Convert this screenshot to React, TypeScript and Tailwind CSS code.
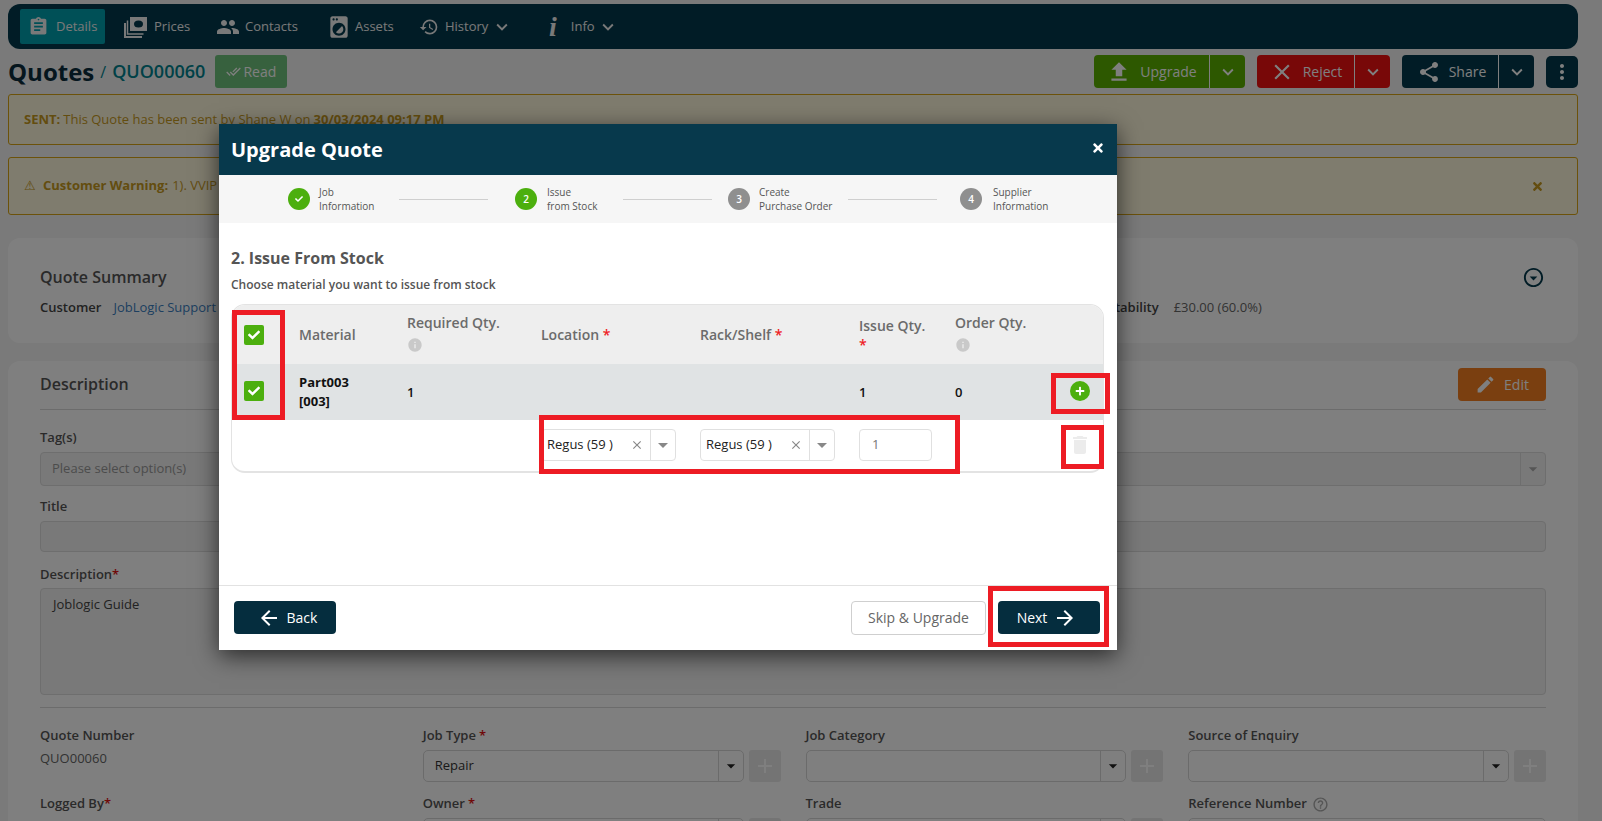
import {
  MdAssignment,
  MdPeople,
  MdLocalLaundryService,
  MdHistory,
  MdKeyboardArrowDown,
  MdFileUpload,
  MdClose,
  MdShare,
  MdMoreVert,
  MdEdit,
  MdDoneAll,
  MdAdd,
  MdArrowBack,
  MdArrowForward,
  MdArrowDropDown,
  MdDelete,
  MdInfo,
  MdOutlineArrowDropDownCircle,
  MdHelpOutline,
} from "react-icons/md";
import { FaCheck, FaPlus, FaTimes } from "react-icons/fa";

const Prices = () => (
  <svg width="23" height="22" viewBox="0 0 23 22" fill="none" stroke="currentColor" strokeWidth="2">
    <path d="M1 7v14h17" />
    <path d="M3.5 4.5v13.5h16" strokeWidth="1.5" />
    <rect x="6" y="1" width="17" height="14" fill="currentColor" stroke="none" />
    <ellipse cx="14.5" cy="8" rx="4.5" ry="3.5" fill="#03394c" stroke="none" />
  </svg>
);

const NavItem = ({ icon, label, chevron, className }: { icon: React.ReactNode; label: string; chevron?: string; className: string }) => (
  <div className={`flex items-center text-[13px] ${className}`}>
    {icon}
    <span className="flex items-center">
      {label}
      {chevron ? <MdKeyboardArrowDown size={22} className={chevron} /> : null}
    </span>
  </div>
);

const SplitButton = ({ icon, label, bg, main, w }: { icon: React.ReactNode; label: string; bg: string; main: string; w: string }) => (
  <div className={`flex h-[33px] items-center rounded-[4px] text-white text-[14px] ${bg} ${w}`}>
    <div className={`flex items-center justify-center gap-[8px] h-full border-r border-white ${main}`}>
      {icon}
      <span>{label}</span>
    </div>
    <div className="flex-1 flex justify-center">
      <MdKeyboardArrowDown size={22} />
    </div>
  </div>
);

const FormSelect = ({ value, plus, arrow = true }: { value?: string; plus?: boolean; arrow?: boolean }) => (
  <div className="flex gap-[5px]">
    <div className="flex-1 h-[32px] flex items-center border border-[#d6d6d6] rounded-[5px] text-[13px] text-[#333] pl-[11px]">
      <span className="flex-1">{value}</span>
      {arrow ? (
        <div className="w-[25px] h-full border-l border-[#d6d6d6] flex items-center justify-center text-[#222]">
          <MdArrowDropDown size={20} />
        </div>
      ) : null}
    </div>
    {plus ? (
      <div className="w-[32px] h-[32px] bg-[#e8e8e8] rounded-[3px] flex items-center justify-center text-white">
        <MdAdd size={24} />
      </div>
    ) : null}
  </div>
);

const Label = ({ text, required, tight, children }: { text: string; required?: boolean; tight?: boolean; children?: React.ReactNode }) => (
  <div className="h-[16px] flex items-center text-[13px] font-semibold text-[#555]">
    {text}
    {required ? <span className={`text-[#e01010] ${tight ? "" : "ml-[3px]"}`}>*</span> : null}
    {children}
  </div>
);

const steps = [
  { n: "check", a: "Job", b: "Information", text: "w-[80px]", gap: "mr-[27px]", on: true },
  { n: "2", a: "Issue", b: "from Stock", text: "w-[76px] ml-[10px]", gap: "mr-[16px]", on: true },
  { n: "3", a: "Create", b: "Purchase Order", text: "w-[89px]", gap: "mr-[23px]", on: false },
  { n: "4", a: "Supplier", b: "Information", text: "ml-[11px]", gap: "", on: false },
];

const Stepper = () => (
  <div className="h-[48px] bg-[#f6f6f6] flex items-center pl-[69px]">
    {steps.map((s, i) => (
      <div key={s.n} className="flex items-center">
        <div className={`w-[22px] h-[22px] rounded-full flex items-center justify-center text-white text-[10px] font-semibold ${s.on ? "bg-[#4caf0e]" : "bg-[#8f8f8f]"}`}>
          {s.n === "check" ? <FaCheck size={8} /> : s.n}
        </div>
        <div className={`ml-[9px] text-[10px] leading-[14px] text-[#555] ${s.text}`}>
          <div>{s.a}</div>
          <div>{s.b}</div>
        </div>
        {i < 3 ? <div className={`w-[89px] h-px bg-[#cfcfcf] ${s.gap}`} /> : null}
      </div>
    ))}
  </div>
);

const Check = () => (
  <div className="w-[20px] h-[20px] rounded-[2px] bg-[#4caf0e] flex items-center justify-center text-white">
    <FaCheck size={12} />
  </div>
);

const RowSelect = () => (
  <div className="w-[135px] h-[32px] flex items-center border border-[#e0e0e0] rounded-[4px] text-[13px] text-[#222] pl-[5px]">
    <span className="flex-1">Regus (59 )</span>
    <MdClose size={14} className="text-[#888] mr-[6px]" />
    <div className="w-[25px] h-full border-l border-[#e0e0e0] flex items-center justify-center text-[#888]">
      <MdArrowDropDown size={24} />
    </div>
  </div>
);

const grid = "grid grid-cols-[67px_108px_134px_159px_159px_96px_81px_1fr] items-center";

const HeadInfo = () => <MdInfo size={16} className="text-[#c9c9c9] mt-[5px]" />;

const Modal = () => (
  <div className="absolute left-[219px] top-[124px] w-[898px] h-[526px] bg-white flex flex-col shadow-[0_6px_22px_rgba(0,0,0,0.65)]">
    <div className="h-[51px] bg-[#07394c] flex items-center justify-between pl-[12px] pr-[12px] text-white">
      <span className="text-[20px] font-bold">Upgrade Quote</span>
      <FaTimes size={14} className="-mt-[3px]" />
    </div>
    <Stepper />
    <div className="flex-1 px-[12px]">
      <div className="mt-[23px] text-[16px] leading-[24px] font-bold text-[#555]">2. Issue From Stock</div>
      <div className="mt-[7px] text-[12px] leading-[16px] font-semibold text-[#555]">Choose material you want to issue from stock</div>
      <div className="mt-[11px] w-[873px] h-[169px] rounded-[14px] border border-[#e3e3e3] border-b-2 overflow-hidden text-[14px]">
        <div className={`${grid} h-[59px] bg-[#eeeeee] font-semibold text-[#6b6b6b]`}>
          <div className="pl-[12px]">
            <Check />
          </div>
          <div>Material</div>
          <div className="-mt-[3px]">
            <div className="leading-[18px]">Required Qty.</div>
            <HeadInfo />
          </div>
          <div>
            Location <span className="text-[#ee1c25]">*</span>
          </div>
          <div>
            Rack/Shelf <span className="text-[#ee1c25]">*</span>
          </div>
          <div>
            <div className="leading-[18px]">Issue Qty.</div>
            <div className="text-[#ee1c25] leading-[16px] mt-[2px]">*</div>
          </div>
          <div className="-mt-[3px]">
            <div className="leading-[18px]">Order Qty.</div>
            <HeadInfo />
          </div>
        </div>
        <div className={`${grid} h-[56px] bg-[#e0e3e4] text-[13px] font-semibold text-[#111]`}>
          <div className="pl-[12px] -mt-[2px]">
            <Check />
          </div>
          <div className="font-bold leading-[19px] -mt-[1px]">
            Part003
            <br />
            [003]
          </div>
          <div className="mt-[1px]">1</div>
          <div />
          <div />
          <div className="mt-[1px]">1</div>
          <div className="mt-[1px]">0</div>
          <div className="flex justify-end pr-[13px] -mt-[2px]">
            <div className="w-[20px] h-[20px] rounded-full bg-[#4caf0e] flex items-center justify-center text-white">
              <FaPlus size={10} />
            </div>
          </div>
        </div>
        <div className={`${grid} h-[51px] pb-[1px]`}>
          <div />
          <div />
          <div />
          <RowSelect />
          <RowSelect />
          <div className="w-[73px] h-[32px] border border-[#e0e0e0] rounded-[4px] flex items-center pl-[12px] text-[13px] text-[#777]">1</div>
          <div />
          <div className="flex justify-end pr-[11px] text-[#ececec]">
            <MdDelete size={24} />
          </div>
        </div>
      </div>
    </div>
    <div className="h-[65px] border-t border-[#e2e2e2] flex items-start justify-between pt-[15px] pl-[15px] pr-[17px]">
      <button className="w-[102px] h-[33px] rounded-[4px] bg-[#052d3e] text-white text-[14px] flex items-center justify-center gap-[6px] pl-[4px]">
        <MdArrowBack size={24} />
        Back
      </button>
      <div className="flex gap-[12px]">
        <button className="w-[135px] h-[34px] rounded-[4px] bg-white border border-[#cfcfcf] text-[#666] text-[14px] pb-[2px]">Skip &amp; Upgrade</button>
        <button className="w-[102px] h-[33px] rounded-[4px] bg-[#052d3e] text-white text-[14px] flex items-center justify-center gap-[6px] pr-[4px]">
          Next
          <MdArrowForward size={24} />
        </button>
      </div>
    </div>
    {/* red annotation boxes on top of the dialog */}
    <div className="absolute left-[13px] top-[186px] w-[53px] h-[110px] border-[5px] border-[#ed1c24]" />
    <div className="absolute left-[320px] top-[291px] w-[421px] h-[59px] border-[5px] border-[#ed1c24]" />
    <div className="absolute left-[832px] top-[249px] w-[59px] h-[41px] border-[5px] border-[#ed1c24]" />
    <div className="absolute left-[842px] top-[301px] w-[43px] h-[44px] border-[5px] border-[#ed1c24]" />
    <div className="absolute left-[769px] top-[462px] w-[121px] h-[61px] border-[5px] border-[#ed1c24]" />
  </div>
);

const App = () => {
  return (
    <div className="relative h-[821px] overflow-hidden bg-[#f5f5f5] pl-[8px] pr-[24px] pt-[4px] font-['Open_Sans',sans-serif]">
      <div className="h-[45px] rounded-[12px] bg-[#03394c] text-[#f2f2f2] flex items-center pl-[12px]">
        <NavItem className="w-[85px] h-[35px] bg-[#00a0ae] rounded-[2px] pl-[8px] gap-[7px]" icon={<MdAssignment size={21} />} label="Details" />
        <NavItem className="ml-[19px] w-[92px] gap-[7px]" icon={<Prices />} label="Prices" />
        <NavItem className="w-[111px] gap-[5px]" icon={<MdPeople size={24} />} label="Contacts" />
        <NavItem className="w-[92px] gap-[3px]" icon={<MdLocalLaundryService size={26} className="-ml-[1px]" />} label="Assets" />
        <NavItem className="w-[128px] gap-[6px]" icon={<MdHistory size={20} />} label="History" chevron="ml-[3px]" />
        <NavItem className="gap-[14px]" icon={<span className="ml-[2px] font-['Liberation_Serif',serif] italic font-bold text-[28px] leading-none">i</span>} label="Info" chevron="ml-[2px]" />
      </div>

      <div className="mt-[6px] h-[33px] flex items-center">
        <span className="text-[24px] font-bold text-[#0a2c3c]">Quotes</span>
        <span className="text-[16px] text-[#00838f] ml-[6px]">/</span>
        <span className="text-[18px] font-semibold text-[#00838f] ml-[6px]">QUO00060</span>
        <div className="ml-[10px] w-[72px] h-[33px] rounded-[3px] bg-[#6fc27c] text-white text-[14px] flex items-center justify-center gap-[2px]">
          <MdDoneAll size={15} />
          Read
        </div>
        <div className="ml-auto flex items-center gap-[12px]">
          <SplitButton bg="bg-[#5ab100]" w="w-[151px]" main="w-[116px]" icon={<MdFileUpload size={26} />} label="Upgrade" />
          <SplitButton bg="bg-[#f01010]" w="w-[133px]" main="w-[98px]" icon={<MdClose size={26} />} label="Reject" />
          <SplitButton bg="bg-[#03394c]" w="w-[132px]" main="w-[97px] pl-[3px]" icon={<MdShare size={24} />} label="Share" />
          <div className="w-[32px] h-[32px] rounded-[5px] bg-[#03394c] text-white flex items-center justify-center">
            <MdMoreVert size={24} />
          </div>
        </div>
      </div>

      <div className="mt-[6px] h-[51px] rounded-[3px] border border-[#d9a514] bg-[#fff8dc] flex items-center pl-[15px] text-[13px] text-[#c79a1e]">
        <b className="mr-[3px]">SENT:</b> This Quote has been sent by Shane W on <b className="ml-[3px]">30/03/2024 09:17 PM</b>
      </div>
      <div className="mt-[12px] h-[58px] rounded-[3px] border border-[#d9a514] bg-[#fff8dc] flex items-center pl-[15px] pr-[33px] text-[13px] text-[#c79a1e]">
        <span className="mr-[7px]">⚠</span>
        <b className="mr-[4px]">Customer Warning:</b> 1). VVIP
        <FaTimes size={13} className="ml-auto" />
      </div>

      <div className="mt-[23px] h-[105px] rounded-[12px] bg-white px-[32px] pt-[27px] relative">
        <div className="flex items-center justify-between h-[24px]">
          <span className="text-[16px] font-semibold text-[#555]">Quote Summary</span>
          <MdOutlineArrowDropDownCircle size={23} className="text-[#03394c] mr-[1px]" />
        </div>
        <div className="mt-[10px] flex text-[13px] leading-[16px]">
          <span className="font-semibold text-[#444]">Customer</span>
          <span className="ml-[12px] text-[#3a7fc1]">JobLogic Support</span>
          <span className="ml-[869px] font-semibold text-[#444]">Profitability</span>
          <span className="ml-[15px] text-[#666]">£30.00 (60.0%)</span>
        </div>
      </div>

      <div className="mt-[18px] h-[480px] rounded-[12px] bg-white px-[32px] pt-[7px]">
        <div className="h-[42px] border-b border-[#d8d8d8] flex items-start justify-between">
          <span className="text-[16px] font-semibold text-[#555] leading-[32px]">Description</span>
          <div className="w-[88px] h-[33px] rounded-[4px] bg-[#f47f20] text-white text-[14px] flex items-center justify-center gap-[8px]">
            <MdEdit size={21} />
            Edit
          </div>
        </div>
        <div className="mt-[20px]">
          <Label text="Tag(s)" />
        </div>
        <div className="mt-[6px] h-[34px] rounded-[4px] border border-[#dcdcdc] bg-[#f2f2f2] flex items-center justify-between pl-[11px] text-[13px] text-[#999]">
          Please select option(s)
          <div className="w-[25px] h-full border-l border-[#dcdcdc] flex items-center justify-center text-[#aaa]">
            <MdArrowDropDown size={20} />
          </div>
        </div>
        <div className="mt-[13px]">
          <Label text="Title" />
        </div>
        <div className="mt-[6px] h-[31px] rounded-[4px] border border-[#dcdcdc] bg-[#f2f2f2]" />
        <div className="mt-[15px]">
          <Label text="Description" required tight />
        </div>
        <div className="mt-[5px] h-[107px] rounded-[4px] border border-[#dcdcdc] bg-[#f2f2f2] pl-[12px] pt-[6px] text-[13px] text-[#444]">Joblogic Guide</div>
        <div className="mt-[12px] h-px bg-[#d8d8d8]" />
        <div className="mt-[20px] grid grid-cols-4 gap-x-[25px]">
          <div>
            <Label text="Quote Number" />
            <div className="mt-[6px] h-[16px] text-[13px] leading-[16px] text-[#666]">QUO00060</div>
            <div className="mt-[30px]">
              <Label text="Logged By" required tight />
            </div>
          </div>
          <div>
            <Label text="Job Type" required />
            <div className="mt-[6px]">
              <FormSelect value="Repair" plus />
            </div>
            <div className="mt-[14px]">
              <Label text="Owner" required />
            </div>
            <div className="mt-[6px]">
              <FormSelect plus />
            </div>
          </div>
          <div>
            <Label text="Job Category" />
            <div className="mt-[6px]">
              <FormSelect plus />
            </div>
            <div className="mt-[14px]">
              <Label text="Trade" />
            </div>
            <div className="mt-[6px]">
              <FormSelect plus />
            </div>
          </div>
          <div>
            <Label text="Source of Enquiry" />
            <div className="mt-[6px]">
              <FormSelect plus />
            </div>
            <div className="mt-[14px]">
              <Label text="Reference Number">
                <MdHelpOutline size={17} className="ml-[5px] text-[#aaa]" />
              </Label>
            </div>
            <div className="mt-[6px]">
              <FormSelect arrow={false} />
            </div>
          </div>
        </div>
      </div>

      <div className="absolute inset-0 bg-black/50" />
      <Modal />
    </div>
  );
};

export default App;
